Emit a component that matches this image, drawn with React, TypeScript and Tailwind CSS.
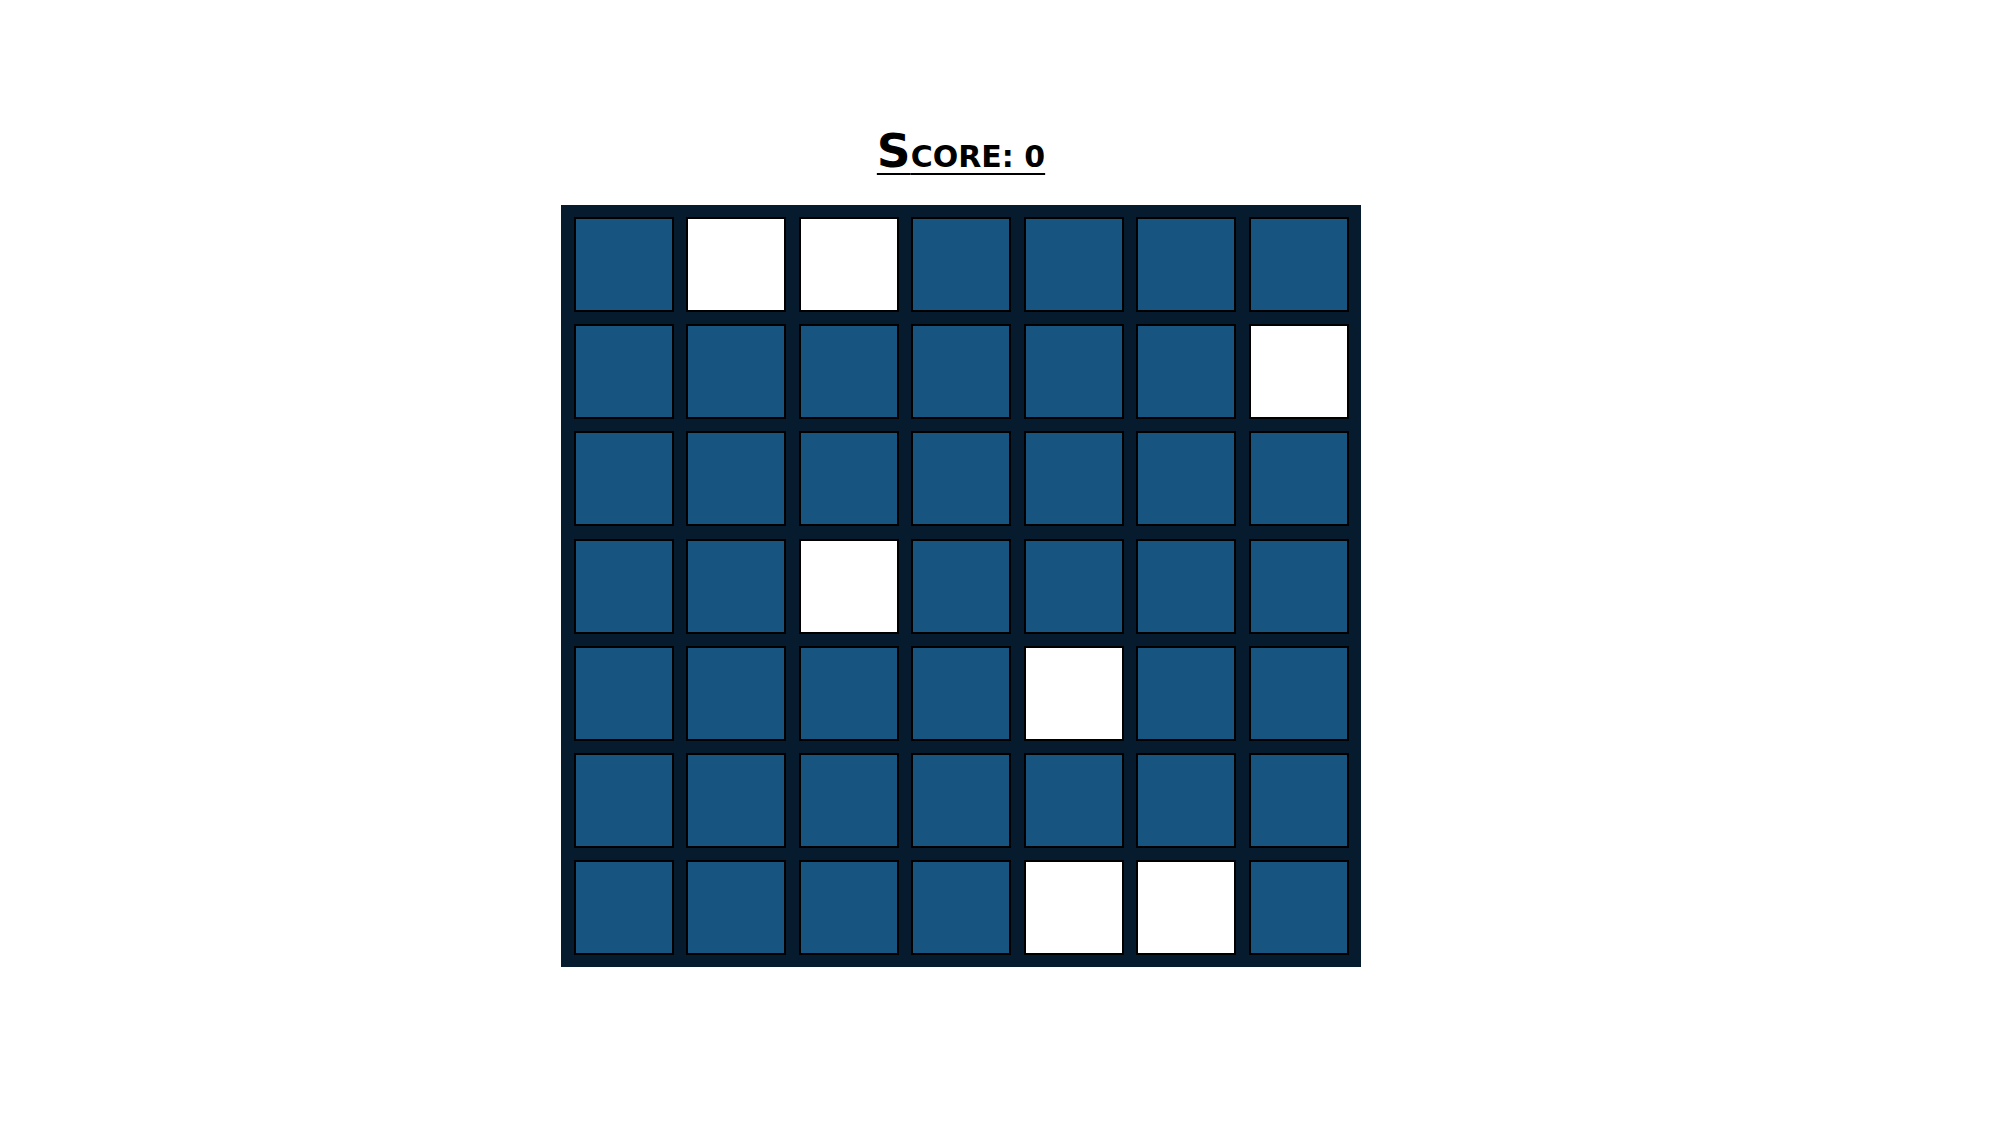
import React from "react";

const whites = new Set(["0-1", "0-2", "1-6", "3-2", "4-4", "6-4", "6-5"]);

const rows = [0, 1, 2, 3, 4, 5, 6];

export default function App() {
    return (
        <div className="flex min-h-[1132px] w-full flex-col items-center bg-white pr-[78px] pt-[124px] font-['DejaVu_Sans',Verdana,sans-serif]">
            <h1 className="text-[30px] font-bold leading-[54px] text-black underline decoration-2 underline-offset-[6px]">
                <span className="text-[47px]">S</span>CORE: 0
            </h1>
            <div className="mt-[21px] grid h-[762px] w-[800px] grid-cols-[repeat(7,100px)] grid-rows-[repeat(7,95px)] content-evenly justify-evenly bg-[#061b2e]">
                {rows.map((r) =>
                    rows.map((c) => (
                        <div
                            key={`${r}-${c}`}
                            className={
                                whites.has(`${r}-${c}`)
                                    ? "border-2 border-black bg-white"
                                    : "border-2 border-black bg-[#185480]"
                            }
                        />
                    ))
                )}
            </div>
        </div>
    );
}
